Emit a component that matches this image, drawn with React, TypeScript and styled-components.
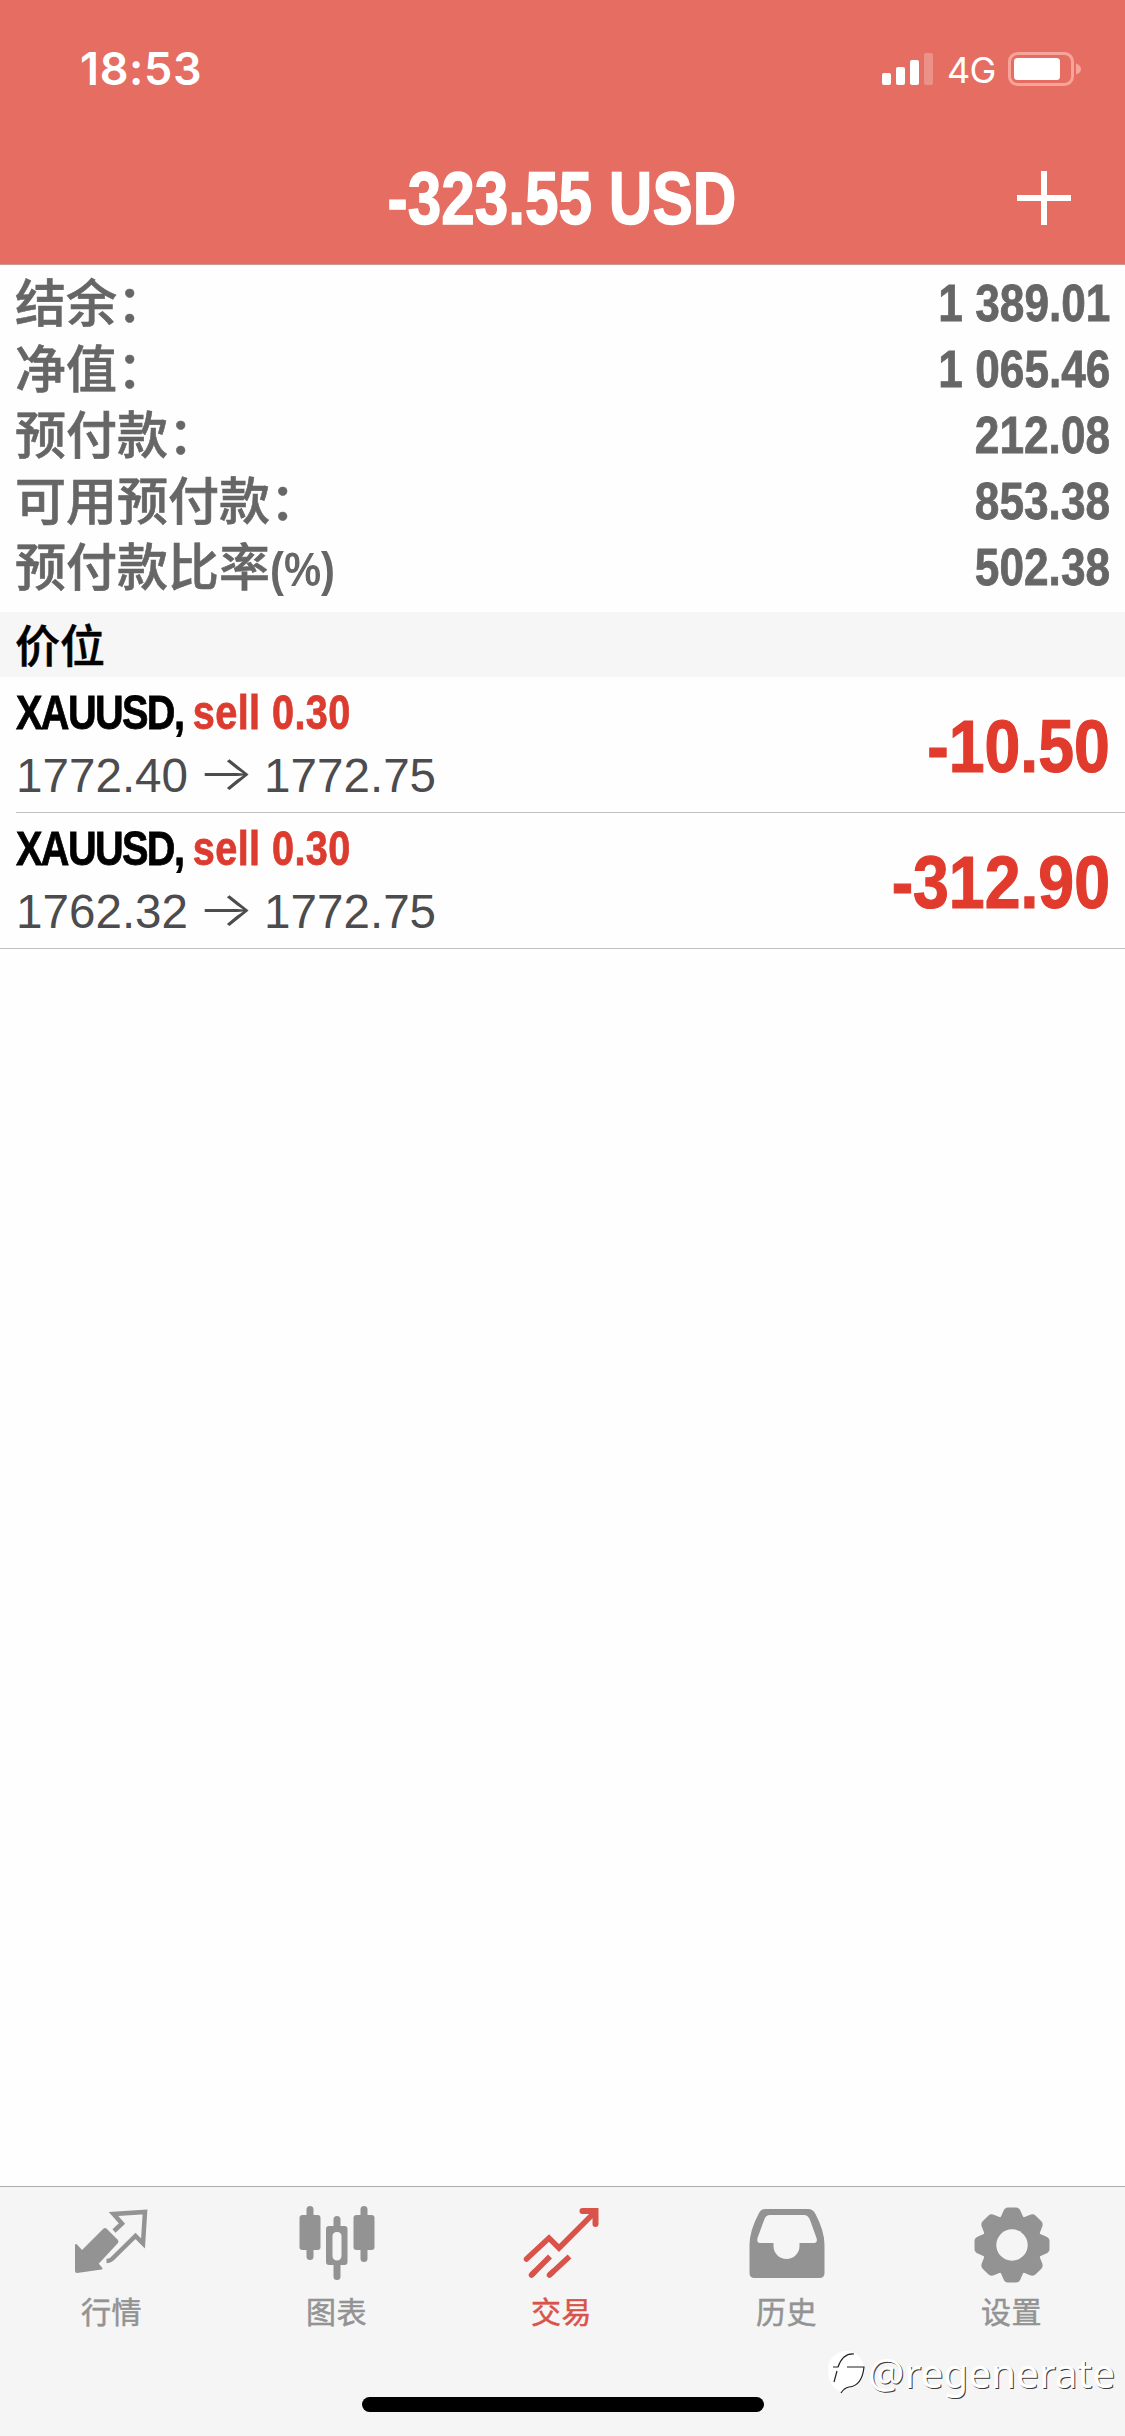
import React from "react";
import styled, { createGlobalStyle } from "styled-components";

const GlobalStyle = createGlobalStyle`
  * { box-sizing: border-box; }
  html, body { margin: 0; padding: 0; background: #fdfdfd; }
`;

const cjk = `"Noto Sans CJK SC", sans-serif`;

const Screen = styled.div`
  position: relative;
  width: 1125px;
  height: 2436px;
  display: flex;
  flex-direction: column;
  overflow: hidden;
  background: #fefefe;
  font-family: "Liberation Sans", ${cjk};
`;

const Header = styled.header`
  height: 265px;
  background: #e56d61;
  border-bottom: 1px solid #c99a94;
  color: #fff;
`;

const StatusBar = styled.div`
  height: 133px;
  padding: 5px 43px 0 80px;
  display: flex;
  align-items: center;
  justify-content: space-between;
`;

const Clock = styled.time`
  font: 600 45px/60px Inter, sans-serif;
  letter-spacing: 0.6px;
`;

const StatusIcons = styled.div`
  display: flex;
  align-items: center;
`;

const Network = styled.span`
  width: 50px;
  margin: 2px 11px 0 13px;
  font: 400 36px/40px Inter, sans-serif;
  letter-spacing: -0.8px;
  white-space: nowrap;
`;

const TitleBar = styled.div`
  height: 130px;
  padding-right: 54px;
  display: grid;
  grid-template-columns: 1fr auto 1fr;
  align-items: center;
`;

const Condensed = styled.span<{ $size: number; $scale: number; $from?: string; $weight?: number }>`
  display: inline-block;
  font-family: "Liberation Sans", sans-serif;
  font-weight: 700;
  font-size: ${(p) => p.$size}px;
  line-height: 1;
  white-space: pre;
  -webkit-text-stroke: ${(p) => p.$weight ?? 0.8}px currentColor;
  transform: scaleX(${(p) => p.$scale});
  transform-origin: ${(p) => p.$from ?? "center"} center;
`;

const Title = styled.h1`
  grid-column: 2;
  margin: 2px -52px 0 0;
  display: flex;
`;

const AddButton = styled.button`
  grid-column: 3;
  justify-self: end;
  width: 54px;
  height: 54px;
  padding: 0;
  border: 0;
  background: none;
`;

const Summary = styled.dl`
  margin: 0;
  height: 347px;
  padding: 5px 15px 0 15px;
  color: #666;
`;

const SummaryRow = styled.div`
  height: 66px;
  display: flex;
  align-items: center;
  justify-content: space-between;
`;

const Label = styled.dt`
  height: 66px;
  margin-top: -6px;
  font: 500 51px/66px ${cjk};
  -webkit-text-stroke: 0.6px currentColor;
  white-space: nowrap;
`;

const Value = styled.dd`
  margin: 0;
  display: flex;
`;

const SectionTitle = styled.h2`
  margin: 0;
  height: 65px;
  padding-left: 15px;
  background: #f6f6f6;
  color: #000;
  font: 500 45px/63px ${cjk};
  -webkit-text-stroke: 0.5px currentColor;
`;

const Position = styled.article<{ $last: boolean }>`
  height: 136px;
  margin-left: ${(p) => (p.$last ? 0 : 16)}px;
  padding: 0 15px 0 ${(p) => (p.$last ? 16 : 0)}px;
  border-bottom: 1px solid #c0c0c3;
  display: flex;
  justify-content: space-between;
  align-items: center;
`;

const Details = styled.div`
  display: flex;
  flex-direction: column;
`;

const Deal = styled.div`
  height: 63px;
  padding-top: 7px;
`;

const SymbolName = styled.span`
  letter-spacing: -2px;
`;

const Side = styled.span`
  color: #dc3c2f;
  letter-spacing: 0.5px;
`;

const Prices = styled.div`
  height: 64px;
  display: flex;
  align-items: center;
  color: #4c4c4e;
  font-size: 47.6px;
  line-height: 60px;
`;

const Arrow = styled.span`
  width: 76px;
  margin-top: -6px;
  text-align: center;
  font: 300 48px/60px Inter, sans-serif;
  transform: scaleX(1.25);
`;

const Profit = styled.div`
  padding-top: 4px;
  display: flex;
  color: #e13b2d;
`;

const Spacer = styled.main`
  flex: 1;
`;

const TabBar = styled.nav`
  height: 250px;
  display: grid;
  grid-template-columns: repeat(5, 1fr);
  background: #f5f5f5;
  border-top: 1px solid #adadad;
`;

const Tab = styled.a<{ $active: boolean }>`
  display: flex;
  flex-direction: column;
  align-items: center;
  padding: 20px 2px 0 0;
  color: ${(p) => (p.$active ? "#d9534a" : "#939393")};
`;

const TabLabel = styled.span`
  margin-top: 6px;
  font: 400 30px/34px ${cjk};
  -webkit-text-stroke: 0.5px currentColor;
  letter-spacing: 0.5px;
`;

const HomeIndicator = styled.div`
  position: absolute;
  left: 362px;
  bottom: 24px;
  width: 402px;
  height: 15px;
  border-radius: 8px;
  background: #000;
`;

const Watermark = styled.div`
  position: absolute;
  right: 10px;
  bottom: 38px;
  display: flex;
  align-items: center;
  gap: 1px;
  color: #fff;
  font: 400 40.5px/50px "Noto Sans", sans-serif;
  text-shadow: 1px 1px 0 #3a3a3a;
`;

const Icon = styled.svg`
  display: block;
  overflow: visible;
`;

const QuotesIcon = () => (
  <Icon width="80" height="80" viewBox="0 0 80 80" fill="none" stroke="currentColor">
    <path fill="currentColor" strokeLinejoin="round" strokeWidth="2" d="M4 38 L10 44.500 L32 22.500 Q33 21.500 34 22.500 L45 33.500 Q46 34.500 45 35.500 L25.500 56.500 L29.500 61.500 L5 65 Q4 65 4 64Z" />
    <path strokeWidth="4.500" strokeLinejoin="miter" d="M42 24 L50 16.500 L41.500 7 L73 5 L71 36.500 L63.500 29 L40 52 Q38 54 34.500 54" />
  </Icon>
);

const ChartIcon = () => (
  <Icon width="80" height="80" viewBox="0 0 80 80" fill="currentColor">
    <rect x="2.500" y="8" width="21" height="35" rx="3" />
    <rect x="9.500" y="-1" width="7" height="54" rx="3.500" />
    <rect x="56.500" y="8" width="21" height="35" rx="3" />
    <rect x="63.500" y="-1" width="7" height="56" rx="3.500" />
    <path fillRule="evenodd" d="M32 19h4.500v-6.500a3.500 3.500 0 0 1 7 0V19h4a3 3 0 0 1 3 3v33a3 3 0 0 1-3 3h-4v11.500a3.500 3.500 0 0 1-7 0V58h-4.500a3 3 0 0 1-3-3V22a3 3 0 0 1 3-3Zm8 6a4 4 0 0 0-4.500 4v20a4.500 4.500 0 0 0 9 0V29a4 4 0 0 0-4.500-4Z" />
  </Icon>
);

const TradeIcon = () => (
  <Icon width="80" height="80" viewBox="0 0 80 80" fill="none" stroke="currentColor" strokeWidth="5.500" strokeLinecap="round">
    <path d="M4.500 52 L27 31 L37 41 L73 5" />
    <path strokeWidth="6" d="M60.500 4 H73.500 V17" />
    <path strokeLinecap="butt" d="M9.500 68 L28 49.500 M27.500 68 L47.500 49.500" />
    <path d="M9.500 68 l3 -3 M27.500 68 l3 -2.800" />
  </Icon>
);

const HistoryIcon = () => (
  <Icon width="80" height="80" viewBox="0 0 80 80" fill="currentColor">
    <path fillRule="evenodd" d="M18 2H61Q66 2 68.500 7Q77.500 24 77.500 38V66Q77.500 71 72.500 71H7.500Q2.500 71 2.500 66V38Q2.500 24 11.500 7Q14 2 18 2ZM23 8Q19 8 17.500 12L10.500 31Q9.500 36 13 36H26.500V39A12.500 12.500 0 0 0 52.500 39V36H66.500Q71 36 69.500 31L63 13Q61 8 57 8Z" />
  </Icon>
);

const SettingsIcon = () => (
  <Icon width="80" height="80" viewBox="-40 -38 80 80" fill="currentColor">
    <mask id="gear-hole">
      <rect x="-40" y="-40" width="80" height="80" fill="#fff" />
      <circle r="15.700" fill="#000" />
    </mask>
    <g mask="url(#gear-hole)">
      <circle r="29.500" />
      {[0, 45, 90, 135, 180, 225, 270, 315].map((a) => (
        <path key={a} transform={`rotate(${a})`} d="M-12.500 -26 Q-11 -28 -9 -33 Q-7.500 -37.500 -4 -37.500 H4 Q7.500 -37.500 9 -33 Q11 -28 12.500 -26Z" />
      ))}
    </g>
  </Icon>
);

const summary = [
  { label: "结余：", value: "1 389.01" },
  { label: "净值：", value: "1 065.46" },
  { label: "预付款：", value: "212.08" },
  { label: "可用预付款：", value: "853.38" },
  { label: "预付款比率", unit: "(%)", value: "502.38" },
];

const positions = [
  { open: "1772.40", now: "1772.75", profit: "-10.50" },
  { open: "1762.32", now: "1772.75", profit: "-312.90" },
];

const tabs = [
  { label: "行情", Glyph: QuotesIcon },
  { label: "图表", Glyph: ChartIcon },
  { label: "交易", Glyph: TradeIcon, active: true },
  { label: "历史", Glyph: HistoryIcon },
  { label: "设置", Glyph: SettingsIcon },
];

export default function App() {
  return (
    <Screen>
      <GlobalStyle />
      <Header>
        <StatusBar>
          <Clock>18:53</Clock>
          <StatusIcons>
            <Icon width="52" height="34" viewBox="0 0 52 34" fill="#fff">
              <rect x="0" y="21" width="9" height="12" rx="2" />
              <rect x="14" y="15" width="9" height="18" rx="2" />
              <rect x="28" y="8" width="9" height="25" rx="2" />
              <rect x="42" y="1" width="9" height="32" rx="2" opacity="0.25" />
            </Icon>
            <Network>4G</Network>
            <Icon width="74" height="34" viewBox="0 0 74 34" fill="#fff">
              <rect x="1.500" y="1.500" width="63" height="31" rx="8" fill="none" stroke="#f7a49b" strokeWidth="3" />
              <rect x="6" y="6" width="46" height="22" rx="3.500" />
              <path d="M68 11.500q5 1.500 5 5.500t-5 5.500Z" fill="#f7a49b" />
            </Icon>
          </StatusIcons>
        </StatusBar>
        <TitleBar>
          <Title><Condensed $size={74} $scale={0.815} $weight={1.4}>-323.55 USD</Condensed></Title>
          <AddButton aria-label="+">
            <Icon width="54" height="54" viewBox="0 0 54 54" stroke="#fff" strokeWidth="6">
              <path d="M27 0V54M0 27H54" />
            </Icon>
          </AddButton>
        </TitleBar>
      </Header>
      <Summary>
        {summary.map(({ label, unit, value }) => (
          <SummaryRow key={label}>
            <Label>
              {label}
              {unit && <Condensed $size={48} $scale={0.87} $from="left" $weight={0}>{unit}</Condensed>}
            </Label>
            <Value><Condensed $size={52} $scale={0.85} $from="right">{value}</Condensed></Value>
          </SummaryRow>
        ))}
      </Summary>
      <SectionTitle>价位</SectionTitle>
      {positions.map((p, i) => (
        <Position key={p.open} $last={i === positions.length - 1}>
          <Details>
            <Deal>
              <Condensed $size={49} $scale={0.81} $from="left">
                <SymbolName>XAUUSD, </SymbolName>
                <Side>sell 0.30</Side>
              </Condensed>
            </Deal>
            <Prices>{p.open}<Arrow>→</Arrow>{p.now}</Prices>
          </Details>
          <Profit><Condensed $size={74} $scale={0.87} $from="right" $weight={1.2}>{p.profit}</Condensed></Profit>
        </Position>
      ))}
      <Spacer />
      <TabBar>
        {tabs.map(({ label, Glyph, active }) => (
          <Tab key={label} $active={!!active}>
            <Glyph />
            <TabLabel>{label}</TabLabel>
          </Tab>
        ))}
      </TabBar>
      <HomeIndicator />
      <Watermark>
        <Icon width="40" height="46" viewBox="0 0 40 46">
          <path d="M1 20A18 18 0 0 1 37 18Q38 30 26 36Q19 38 14 42Q1 36 1 20Z" fill="#fff" />
          <path d="M6 17H11Q16 3 27 4M20 17H37Q35 36 22 37Q17 38 14 43M10 21L7 32" fill="none" stroke="#222" strokeWidth="1.200" />
        </Icon>
        @regenerate
      </Watermark>
    </Screen>
  );
}
